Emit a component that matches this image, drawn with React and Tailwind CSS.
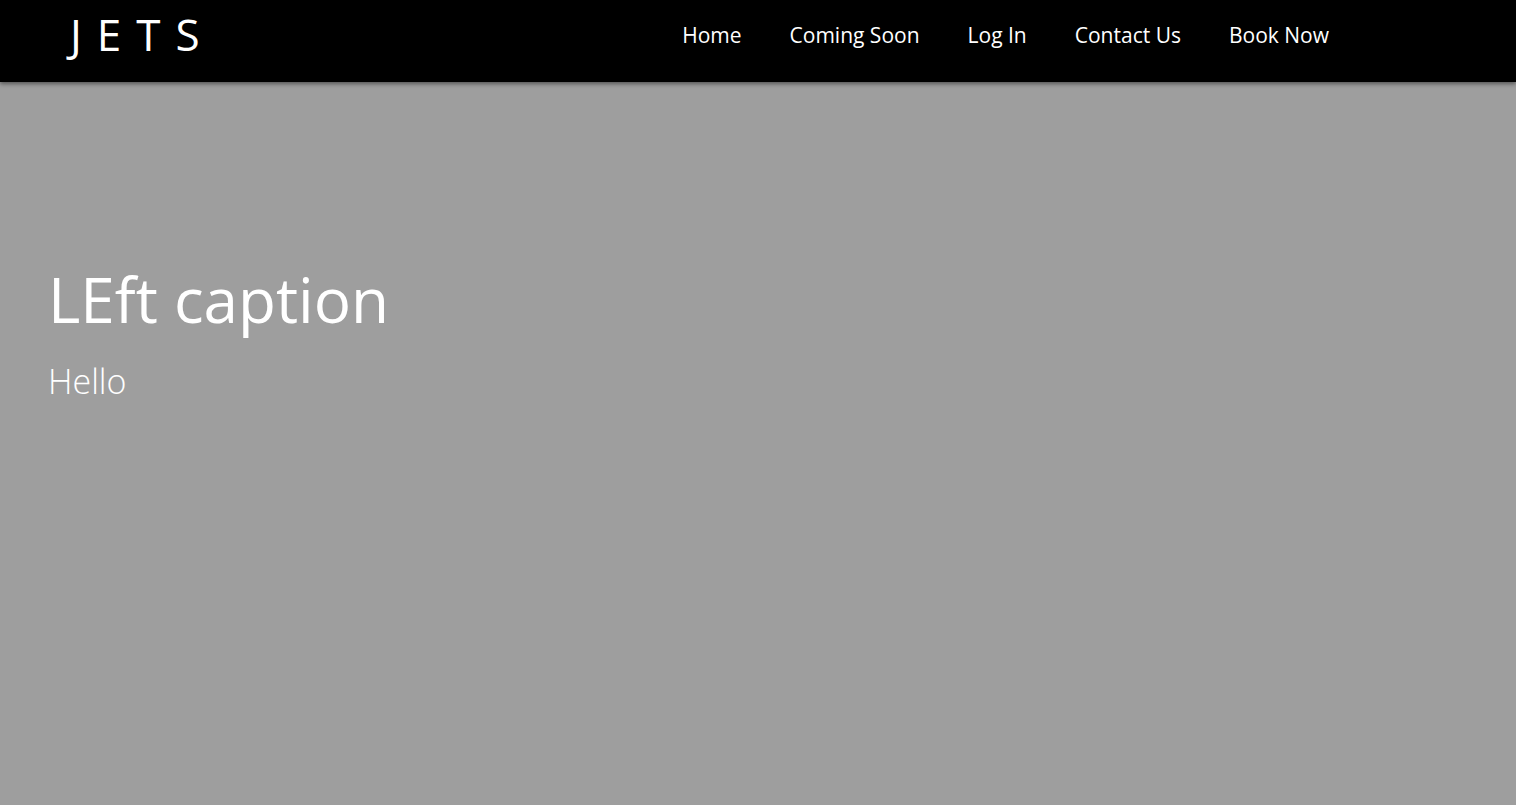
import React from 'react';

const links = ['Home', 'Coming Soon', 'Log In', 'Contact Us', 'Book Now'];

const App = () => {
    return (
        <div className="min-h-screen bg-[#9e9e9e] font-['Open_Sans',sans-serif]">
            {/* Top bar */}
            <header className="h-[82px] bg-black flex items-center shadow-[0_2px_4px_rgba(0,0,0,0.45)] relative">
                <div className="pl-[70px] text-white text-[44px] tracking-[15px] leading-none -mt-[14px]">
                    JETS
                </div>
                <nav className="ml-auto mr-[187px] flex gap-[48px] text-white text-[21px] -mt-[12px]">
                    {links.map((l) => (
                        <a key={l} href="#" className="leading-none">{l}</a>
                    ))}
                </nav>
            </header>

            {/* Caption */}
            <div className="pl-[48px] pt-[186px] text-white">
                <h1 className="text-[62px] leading-none">LEft caption</h1>
                <p className="mt-[34px] text-[34px] font-light leading-none">Hello</p>
            </div>
        </div>
    );
};

export default App;
